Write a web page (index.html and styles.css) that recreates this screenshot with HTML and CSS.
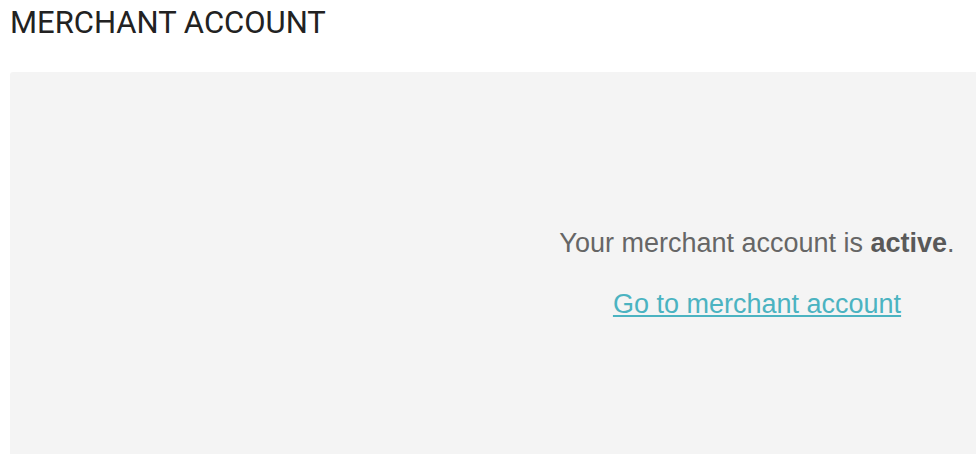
FILE: index.html
```html
<!DOCTYPE html>
<html>
<head>
<meta charset="utf-8">
<link rel="stylesheet" href="styles.css">
</head>
<body>
<h1 class="title">MERCHANT ACCOUNT</h1>
<div class="panel">
  <p class="status">Your merchant account is <b>active</b>.</p>
  <p class="go"><a href="#" class="link">Go to merchant account</a></p>
</div>
</body>
</html>
```
FILE: styles.css
```css
html, body { overflow: hidden; }
body {
  margin: 0;
  background: #fff;
  height: 454px;
}
.title {
  margin: 0;
  padding: 5px 0 0 10px;
  font-family: Roboto, sans-serif;
  font-weight: 400;
  font-size: 31px;
  line-height: 36px;
  color: #222;
}
.panel {
  margin: 31px 0 0 10px;
  height: 400px;
  background: #f4f4f4;
  border-radius: 3px 0 0 0;
  display: flex;
  flex-direction: column;
  align-items: center;
  padding: 155px 0 0 528px;
  box-sizing: border-box;
}
.status {
  margin: 0;
  font-family: "Liberation Sans", Arial, sans-serif;
  font-size: 27px;
  line-height: 32px;
  color: #666;
  white-space: nowrap;
}
.status b { color: #595959; }
.go {
  margin: 29px 0 0;
  font-family: "Liberation Sans", Arial, sans-serif;
  font-size: 27px;
  line-height: 32px;
  white-space: nowrap;
}
.link { color: #4bb3c1; }
```
